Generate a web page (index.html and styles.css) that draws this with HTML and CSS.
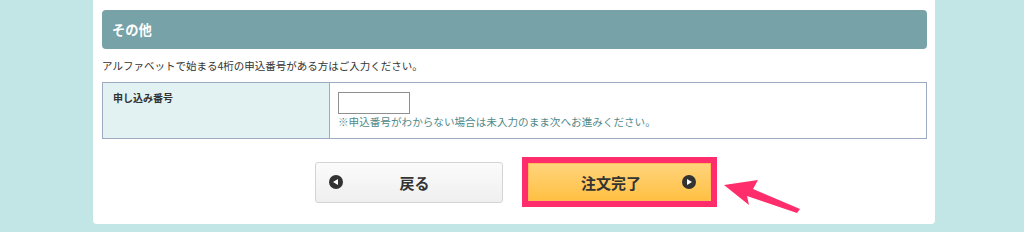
FILE: index.html
```html
<!DOCTYPE html>
<html lang="ja">
<head>
    <meta charset="utf-8">
    <link rel="stylesheet" href="styles.css">
    <title>その他</title>
</head>
<body>
    <div class="panel">
        <h2 class="section-title">その他</h2>
        <p class="lead">アルファベットで始まる4桁の申込番号がある方はご入力ください。</p>

        <table class="form-table">
            <tr>
                <th>申し込み番号</th>
                <td>
                    <input type="text" class="code-input">
                    <p class="note">※申込番号がわからない場合は未入力のまま次へお進みください。</p>
                </td>
            </tr>
        </table>

        <div class="actions">
            <button class="btn btn-back">
                <svg class="btn-icon" viewBox="0 0 14 14"><circle cx="7" cy="7" r="7" fill="#333"/><path d="M4 7 L9 4 L9 10 Z" fill="#fff"/></svg>
                <span class="btn-label">戻る</span>
            </button>

            <div class="highlight">
                <button class="btn btn-submit">
                    <span class="btn-label">注文完了</span>
                    <svg class="btn-icon" viewBox="0 0 14 14"><circle cx="7" cy="7" r="7" fill="#333"/><path d="M10 7 L5 4 L5 10 Z" fill="#fff"/></svg>
                </button>
            </div>
        </div>
    </div>

    <!-- pointer arrow -->
    <svg class="pointer" width="90" height="40" viewBox="0 0 90 40">
        <path d="M2 10 L36 5 L31 14 L78 34 L75 38 L25 21 L27 30 Z" fill="#ff2d6b"/>
    </svg>
</body>
</html>
```

FILE: styles.css
```css
body{
    margin: 0;
    background-color: #c1e6e5;
    font-family: "Noto Sans CJK JP", "Noto Sans", sans-serif;
    color: #333;
    position: relative;
}
.panel{
    width: 825px;
    height: 214px;
    margin-left: 93px;
    padding: 10px 8px 0 9px;
    background-color: #fff;
    border-radius: 0 0 4px 4px;
}
.section-title{
    margin: 0;
    height: 39px;
    line-height: 39px;
    padding-left: 10px;
    background-color: #77a3a8;
    border-radius: 4px;
    color: #fff;
    font-size: 13.3px;
    font-weight: bold;
}
.lead{
    margin: 10px 0 0;
    font-size: 10.5px;
    line-height: 14px;
}
.form-table{
    width: 100%;
    margin-top: 9px;
    border-collapse: collapse;
    border: 1px solid #9eaac2;
}
.form-table th{
    width: 206px;
    height: 39px;
    padding: 8px 10px;
    text-align: left;
    vertical-align: top;
    background-color: #e2f2f2;
    border-right: 1px solid #9eaac2;
    font-size: 10px;
    line-height: 14px;
}
.form-table td{
    padding: 9px 8px 4px 8px;
    vertical-align: top;
}
.code-input{
    display: block;
    width: 68px;
    height: 18px;
    margin: 0;
    padding: 1px;
    border: 1px solid #8f8f8f;
}
.note{
    margin: 1px 0 0;
    font-size: 10.6px;
    line-height: 14px;
    color: #4f8a8b;
}
.actions{
    display: flex;
    justify-content: center;
    align-items: center;
    gap: 19px;
    margin-top: 18px;
    padding-left: 2px;
}
.btn{
    display: flex;
    align-items: center;
    font-family: inherit;
    font-size: 15px;
    font-weight: bold;
    color: #333;
    cursor: pointer;
}
.btn-icon{
    width: 14px;
    height: 14px;
    flex-shrink: 0;
}
.btn-label{
    flex: 1;
    text-align: center;
}
.btn-back{
    width: 188px;
    height: 41px;
    padding: 0 15px 0 13px;
    border: 1px solid #d4d4d4;
    border-radius: 3px;
    background: linear-gradient(#fbfbfb, #efefef);
}
.highlight{
    padding: 6px;
    background-color: #ff2d6b;
}
.btn-submit{
    width: 183px;
    height: 38px;
    padding: 0 14px 0 12px;
    border: 1px solid #ffb95a;
    background: linear-gradient(#ffd47c, #ffc043);
}
.pointer{
    position: absolute;
    left: 722px;
    top: 175px;
}
```
